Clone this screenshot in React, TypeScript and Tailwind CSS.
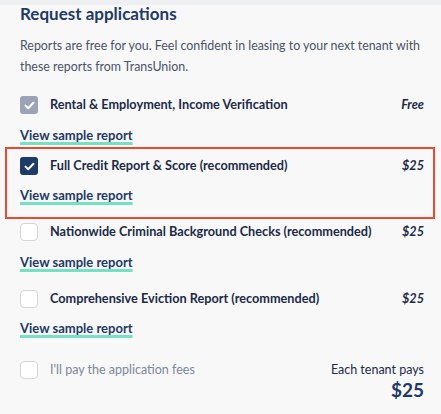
import React from "react";

type Box = "disabled" | "checked" | "empty";

function CheckBox({ state }: { state: Box }) {
  if (state === "empty") {
    return <span className="block h-[18px] w-[18px] shrink-0 rounded-[4px] border-[1.5px] border-[#d3d5d9] bg-white" />;
  }
  const bg = state === "disabled" ? "bg-[#9ba4b6]" : "bg-[#1e3a66]";
  return (
    <span className={`flex h-[18px] w-[18px] shrink-0 items-center justify-center rounded-[3px] ${bg}`}>
      <svg width="11" height="9" viewBox="0 0 11 9" fill="none">
        <path d="M1.5 4.6 4.2 7.2 9.5 1.8" stroke="white" strokeWidth="2" strokeLinecap="round" strokeLinejoin="round" />
      </svg>
    </span>
  );
}

function ReportRow({ label, price, state }: { label: string; price: string; state: Box }) {
  return (
    <div className="flex h-[18px] items-center">
      <CheckBox state={state} />
      <span className="ml-[12px] flex-1 text-[12.7px] font-bold text-[#1b2a47]">{label}</span>
      <span className="text-[12.7px] font-bold italic text-[#1b2a47]">{price}</span>
    </div>
  );
}

function SampleLink({ className }: { className: string }) {
  return (
    <div className={`text-[13px] leading-[16px] ${className}`}>
      <a className="font-bold text-[#1e3a66] underline decoration-[#74e0c4] decoration-[2.5px] underline-offset-[2px] [text-decoration-skip-ink:none]">
        View sample report
      </a>
    </div>
  );
}

export default function App() {
  return (
    <div className="h-[414px] w-[441px] overflow-hidden bg-[#f8f8f9]" style={{ fontFamily: "Lato, 'Noto Sans', sans-serif" }}>
      <div className="h-[5px] bg-[#eeeff1]" />
      <div className="pl-[20px] pr-[17px]">
        <h2 className="text-[17px] font-bold leading-[18px] text-[#1e3a66]">Request applications</h2>
        <p className="mt-[12px] text-[12.4px] leading-[21px] text-[#4a5366]">
          Reports are free for you. Feel confident in leasing to your next tenant with these reports from TransUnion.
        </p>

        <div className="mt-[19px]">
          <ReportRow label="Rental & Employment, Income Verification" price="Free" state="disabled" />
        </div>
        <SampleLink className="mt-[13px]" />

        <div className="-ml-[15px] -mr-[11px] mt-[4px] border-2 border-[#e9492f] pb-[14px] pl-[13px] pr-[9px] pt-[8px]">
          <ReportRow label="Full Credit Report & Score (recommended)" price="$25" state="checked" />
          <SampleLink className="mt-[12px]" />
        </div>

        <div className="mt-[4px]">
          <ReportRow label="Nationwide Criminal Background Checks (recommended)" price="$25" state="empty" />
        </div>
        <SampleLink className="mt-[13px]" />

        <div className="mt-[20px]">
          <ReportRow label="Comprehensive Eviction Report (recommended)" price="$25" state="empty" />
        </div>
        <SampleLink className="mt-[12px]" />

        <div className="mt-[25px] flex items-start justify-between">
          <div className="flex h-[18px] items-center">
            <CheckBox state="empty" />
            <span className="ml-[12px] text-[12.5px] text-[#7b879a]">I'll pay the application fees</span>
          </div>
          <div className="text-right">
            <div className="text-[12.5px] leading-[18px] text-[#1b2a47]">Each tenant pays</div>
            <div className="text-[19px] font-bold leading-[22px] text-[#1e3a66]">$25</div>
          </div>
        </div>
      </div>
    </div>
  );
}
